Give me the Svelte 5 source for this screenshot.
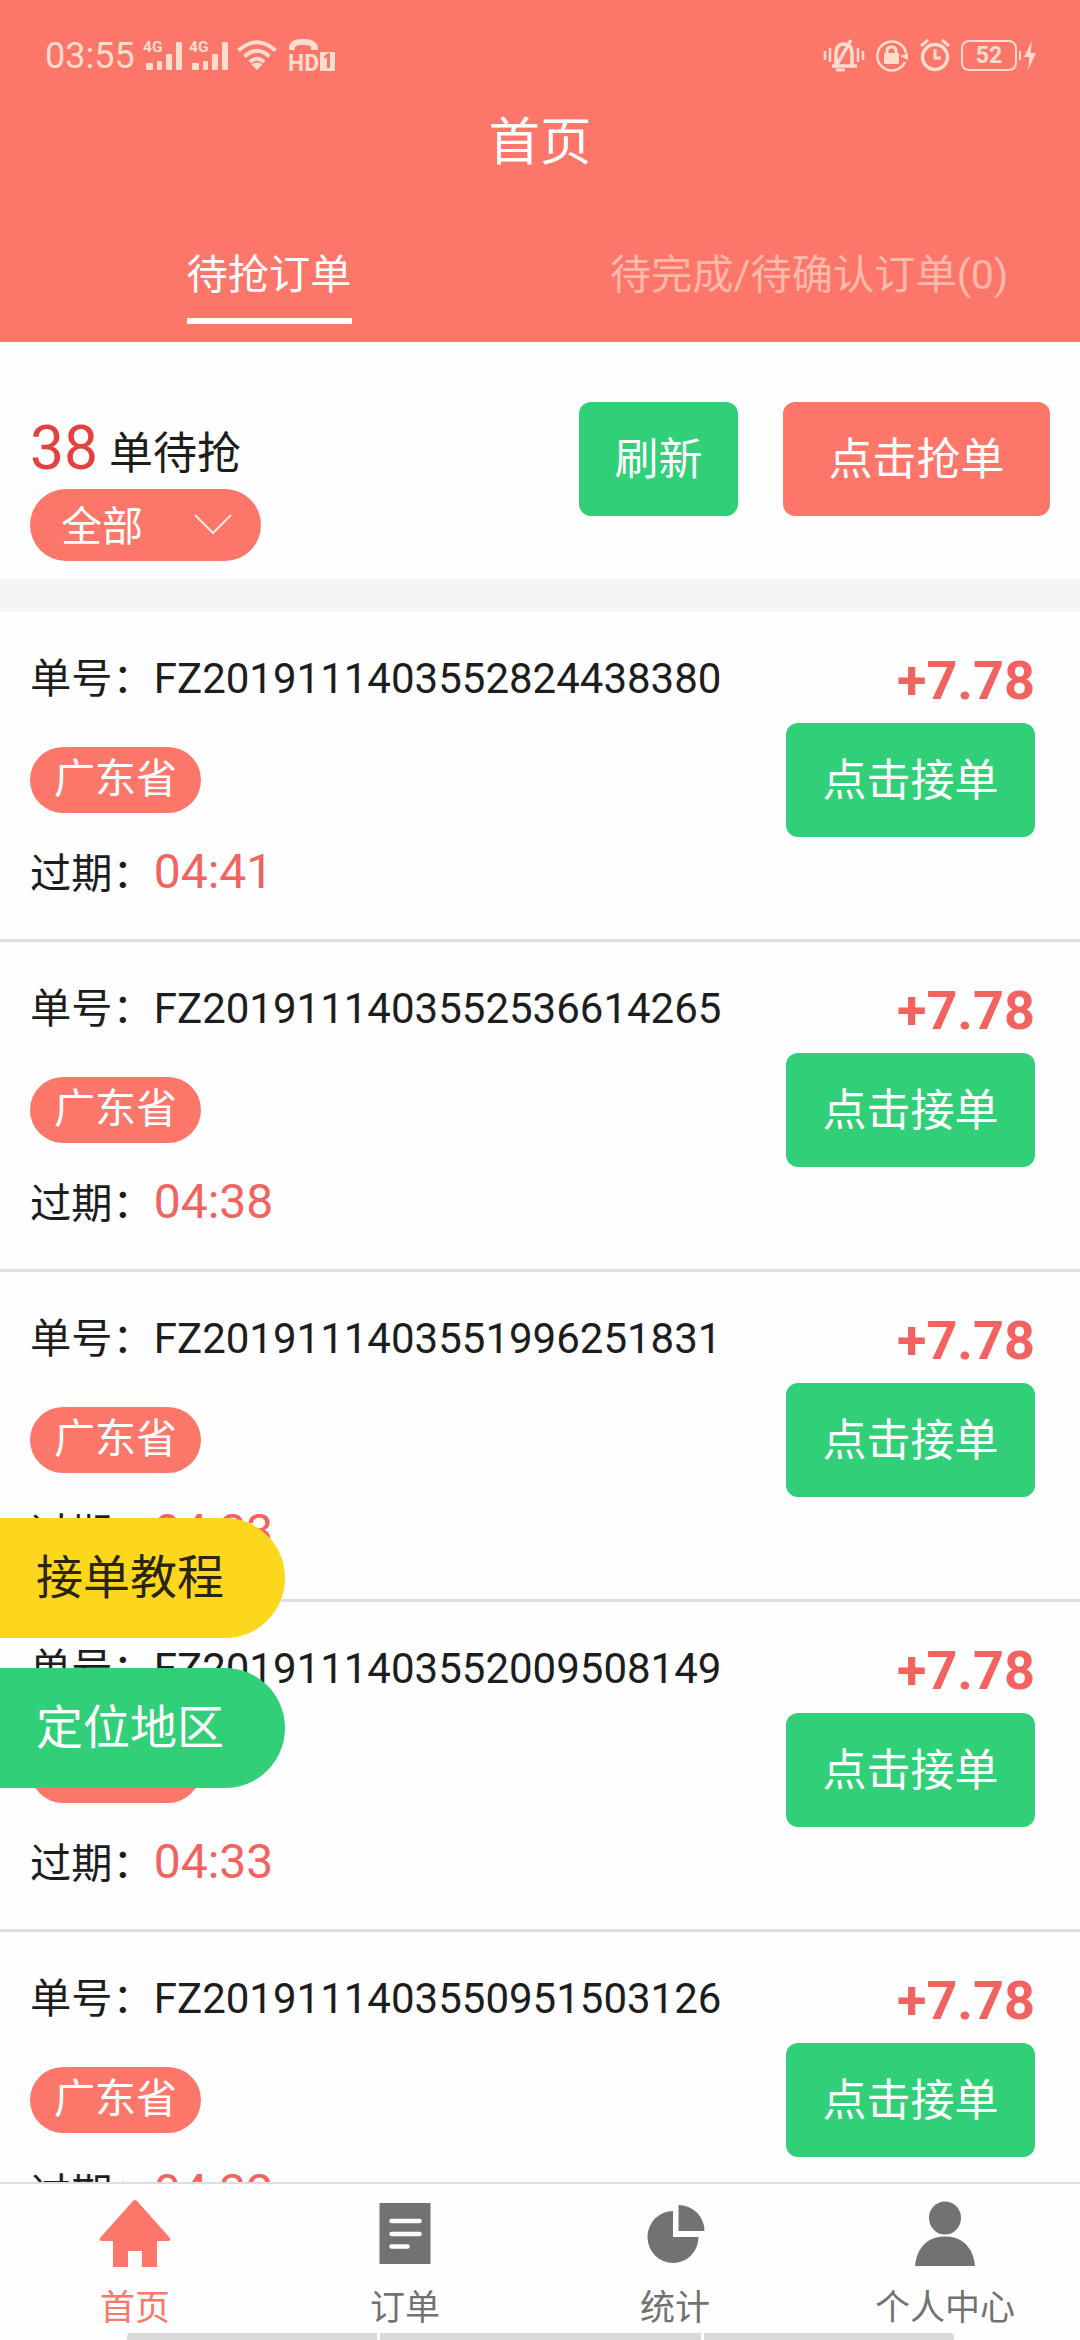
<script lang="ts">
  type Order = { id: string; region: string; expires: string; amount: string };

  const orders: Order[] = [
    { id: 'FZ2019111403552824438380', region: '广东省', expires: '04:41', amount: '+7.78' },
    { id: 'FZ2019111403552536614265', region: '广东省', expires: '04:38', amount: '+7.78' },
    { id: 'FZ2019111403551996251831', region: '广东省', expires: '04:33', amount: '+7.78' },
    { id: 'FZ2019111403552009508149', region: '广东省', expires: '04:33', amount: '+7.78' },
    { id: 'FZ2019111403550951503126', region: '广东省', expires: '04:32', amount: '+7.78' },
  ];

  const navItems = [
    { name: 'home', label: '首页' },
    { name: 'orders', label: '订单' },
    { name: 'stats', label: '统计' },
    { name: 'me', label: '个人中心' },
  ];

  let activeTab = $state(0);
  let activeNav = $state('home');
</script>

{#snippet signal()}
  <svg class="signal" width="38" height="32" viewBox="0 0 38 32">
    <text x="-1" y="12" class="network">4G</text>
    <rect x="2" y="23" width="7" height="7" rx="1" />
    <rect x="13" y="21" width="5" height="9" rx="1" />
    <rect x="22" y="14" width="6" height="16" rx="1" />
    <rect x="32" y="2" width="6" height="28" rx="1" />
  </svg>
{/snippet}

<div class="screen">
  <header>
    <div class="status-bar">
      <div class="status-left">
        <span class="clock">03:55</span>
        {@render signal()}
        {@render signal()}
        <svg class="wifi" width="40" height="32" viewBox="0 0 40 32">
          <path d="M1.500 10.500Q20-6 38.500 10.500" />
          <path d="M7.500 16.500Q20 5 32.500 16.500" />
          <path d="M13 22Q20 15.500 27 22" />
          <path class="dot" d="M14.500 24.500Q20 20.500 25.500 24.500L20 30z" />
        </svg>
        <svg class="hd" width="48" height="34" viewBox="0 0 48 34">
          <path d="M1 11C0 3 6 0 15 0s16 3 15 11h-7c1-4-1-5-8-5s-9 1-8 5z" />
          <text x="0" y="32" class="hd-text" textLength="31" lengthAdjust="spacingAndGlyphs">HD</text>
          <rect x="32" y="13" width="15" height="19" rx="1" />
          <path class="cut" d="M36.500 18.500l4-2.500v13" />
        </svg>
      </div>
      <div class="status-right">
        <svg width="42" height="34" viewBox="0 0 42 34">
          <path class="line" d="M2 12v9M7 9v14M35 9v14M40 12v9" stroke-width="2.500" />
          <path class="line" d="M9 27h25M13 27V15q0-10 8-10t8 10v12M28 1L12 29" stroke-width="3.500" />
          <path class="line" d="M13 31h9" stroke-width="3" />
        </svg>
        <svg width="34" height="34" viewBox="0 0 34 34">
          <path class="line" d="M30 23A14.500 14.500 0 1 1 31 14" stroke-width="2.500" />
          <path d="M25 17l8-3v7z" />
          <rect x="9" y="14" width="15" height="11" rx="1" />
          <path class="line" d="M12 15v-3q0-4 4.500-4t4.500 4v3" stroke-width="3" />
        </svg>
        <svg width="32" height="34" viewBox="0 0 32 34">
          <circle class="line" cx="16" cy="18" r="12.500" stroke-width="3.500" />
          <path class="line" d="M2 7l7-6M30 7l-7-6M16 10v9h6" stroke-width="3" />
        </svg>
        <div class="battery"><span>52</span></div>
        <svg class="bolt" width="18" height="32" viewBox="0 0 18 32">
          <rect x="0" y="11" width="2" height="9" />
          <path d="M13 1L5 17h5.500L9 30l8-17h-5.500z" />
        </svg>
      </div>
    </div>
    <h1>首页</h1>
    <div class="tabs">
      <div class="tab">
        <button class:active={activeTab === 0} onclick={() => (activeTab = 0)}>待抢订单</button>
      </div>
      <div class="tab">
        <button class:active={activeTab === 1} onclick={() => (activeTab = 1)}>待完成/待确认订单(0)</button>
      </div>
    </div>
  </header>

  <section class="summary">
    <div class="summary-info">
      <div class="count"><strong>38</strong> 单待抢</div>
      <button class="filter">
        <span>全部</span>
        <svg width="38" height="22" viewBox="0 0 38 22">
          <path d="M1 1l18 18L37 1" />
        </svg>
      </button>
    </div>
    <button class="btn refresh">刷新</button>
    <button class="btn grab">点击抢单</button>
  </section>

  <main>
    {#each orders as order (order.id)}
      <article>
        <div class="details">
          <div class="text">单号：<span class="number">{order.id}</span></div>
          <span class="region">{order.region}</span>
          <div class="text">过期：<span class="expires">{order.expires}</span></div>
        </div>
        <div class="action">
          <span class="amount">{order.amount}</span>
          <button class="btn accept">点击接单</button>
        </div>
      </article>
    {/each}
  </main>

  <nav>
    {#each navItems as item (item.name)}
      <button class:active={activeNav === item.name} onclick={() => (activeNav = item.name)}>
        <svg width="72" height="68" viewBox="0 0 72 68">
          {#if item.name === 'home'}
            <path d="M36 0Q37 0 38 1L71 38Q72 41 69 41H58V67H43V51H29V67H14V41H3Q0 41 1 38L34 1Q35 0 36 0z" />
          {:else if item.name === 'orders'}
            <rect x="10.500" y="3" width="51" height="61" />
            <path class="rows" d="M22.500 21h28M22.500 34h28M22.500 46.500h16" />
          {:else if item.name === 'stats'}
            <path d="M34 11A25.500 26 0 1 0 59.500 37H34z" />
            <path d="M39.500 5A26 26 0 0 1 65.500 31H39.500z" />
          {:else}
            <ellipse cx="36" cy="18" rx="16" ry="16.500" />
            <path d="M6 66C8 46 20 36.500 36 36.500S64 46 66 66z" />
          {/if}
        </svg>
        <span>{item.label}</span>
      </button>
    {/each}
  </nav>

  <div class="home-indicator"><i></i><i></i><i></i></div>

  <div class="floating">
    <button class="guide">接单教程</button>
    <button class="locate">定位地区</button>
  </div>
</div>

<style>
  :global(body) {
    margin: 0;
  }

  .screen {
    position: relative;
    display: flex;
    flex-direction: column;
    width: 1080px;
    height: 2340px;
    overflow: hidden;
    background: #fefefe;
    color: #1d1d1d;
    font-family: Roboto, "Noto Sans CJK SC", sans-serif;
  }

  button {
    margin: 0;
    padding: 0;
    border: none;
    background: none;
    color: inherit;
    font-family: inherit;
    white-space: nowrap;
    cursor: pointer;
  }

  header {
    display: flex;
    flex-direction: column;
    flex: none;
    height: 342px;
    background: #fd766a;
    color: #fff;
  }

  .status-bar {
    display: flex;
    justify-content: space-between;
    align-items: center;
    height: 111px;
    padding: 0 43px 0 45px;
    color: #ffdccd;
  }

  .status-bar svg {
    fill: #ffdccd;
    overflow: visible;
  }

  .status-left,
  .status-right {
    display: flex;
    align-items: center;
  }

  .clock {
    width: 99px;
    font-size: 36px;
    line-height: 40px;
  }

  .signal {
    margin-right: 8px;
  }

  .network {
    font-size: 15.500px;
    font-weight: 700;
  }

  .wifi {
    margin: 0 11px 0 1px;
  }

  .wifi path {
    fill: none;
    stroke: #ffdccd;
    stroke-width: 4;
  }

  .wifi .dot {
    fill: #ffdccd;
    stroke: none;
  }

  .hd-text {
    font-size: 24px;
    font-weight: 700;
  }

  .hd .cut {
    fill: none;
    stroke: #fd766a;
    stroke-width: 3;
  }

  .status-right svg {
    margin-right: 10px;
  }

  .status-right .line {
    fill: none;
    stroke: #ffdccd;
  }

  .battery {
    box-sizing: border-box;
    width: 56px;
    height: 31px;
    border: 2px solid #ffdccd;
    border-radius: 8px;
    font-size: 23px;
    font-weight: 700;
    line-height: 28px;
    text-align: center;
  }

  .status-right .bolt {
    margin: 0 0 0 2px;
  }

  h1 {
    margin: 0;
    font-size: 51.500px;
    font-weight: 400;
    line-height: 64px;
    text-align: center;
  }

  .tabs {
    display: flex;
    margin-top: 73px;
  }

  .tab {
    display: flex;
    flex: 1 1 0;
    justify-content: center;
    padding-right: 2px;
  }

  .tab button {
    height: 76px;
    padding-bottom: 15px;
    box-sizing: border-box;
    border-bottom: 6px solid transparent;
    color: #ffb9aa;
    font-size: 41.250px;
    line-height: 55px;
  }

  .tab .active {
    border-color: #fff;
    color: #fff;
  }

  .summary {
    display: flex;
    flex: none;
    align-items: flex-start;
    height: 237px;
    padding: 0 30px;
    box-sizing: border-box;
  }

  .summary-info {
    flex: 1;
    padding-top: 71px;
  }

  .count {
    height: 76px;
    font-size: 44px;
    line-height: 72px;
    white-space: pre;
  }

  .count strong {
    color: #e6403e;
    font-size: 60.500px;
    font-weight: 400;
  }

  .filter {
    display: flex;
    justify-content: space-between;
    align-items: center;
    width: 231px;
    height: 72px;
    padding: 0 29px 0 31px;
    border-radius: 36px;
    background: #fd766a;
    color: #fff;
    font-size: 41px;
  }

  .filter span {
    padding-bottom: 5px;
  }

  .filter svg {
    fill: none;
    stroke: #ffe9df;
    stroke-width: 2;
  }

  .btn {
    height: 114px;
    border-radius: 12px;
    color: #fff;
    font-size: 44px;
    line-height: 116px;
  }

  .refresh {
    width: 159px;
    margin-top: 60px;
    background: #31cf78;
  }

  .grab {
    width: 267px;
    margin: 60px 0 0 45px;
    background: #fd766a;
  }

  main {
    flex: 1;
    min-height: 0;
    overflow: hidden;
    border-top: 33px solid #f6f5f6;
  }

  article {
    display: flex;
    justify-content: space-between;
    height: 330px;
    padding: 37px 45px 0 30px;
    box-sizing: border-box;
    border-bottom: 3px solid #e0e0e0;
  }

  .details {
    display: flex;
    flex-direction: column;
    align-items: flex-start;
  }

  .text {
    height: 60px;
    font-size: 41.250px;
    line-height: 60px;
    white-space: nowrap;
  }

  .number {
    font-size: 42px;
  }

  .expires {
    color: #f2625f;
    font-size: 48px;
  }

  .region {
    width: 171px;
    height: 66px;
    margin: 38px 0 29px;
    border-radius: 33px;
    background: #fd766a;
    color: #fff;
    font-size: 41px;
    line-height: 64px;
    text-align: center;
  }

  .action {
    display: flex;
    flex-direction: column;
    align-items: flex-end;
  }

  .amount {
    height: 74px;
    color: #f2625f;
    font-size: 54px;
    font-weight: 700;
    line-height: 64px;
  }

  .accept {
    width: 249px;
    background: #31cf78;
  }

  nav {
    display: flex;
    flex: none;
    height: 151px;
    box-sizing: border-box;
    border-top: 2px solid #dedede;
    background: #fefefe;
    color: #727272;
  }

  nav button {
    display: flex;
    flex: 1 1 0;
    flex-direction: column;
    align-items: center;
    padding-top: 16px;
    font-size: 35px;
    line-height: 44px;
  }

  nav .active {
    color: #fd766a;
  }

  nav svg {
    display: block;
    margin-bottom: 19px;
    fill: currentColor;
  }

  nav .rows {
    fill: none;
    stroke: #fff;
    stroke-width: 4.500;
    stroke-linecap: round;
  }

  .home-indicator {
    display: flex;
    flex: none;
    gap: 3px;
    width: 827px;
    height: 7px;
    margin-left: 127px;
  }

  .home-indicator i {
    flex: 320 1 0;
    background: #d9d9d8;
  }

  .home-indicator i:first-child {
    flex-grow: 250;
    border-top-left-radius: 4px;
  }

  .home-indicator i:last-child {
    flex-grow: 250;
    border-top-right-radius: 4px;
  }

  /* shortcut buttons pinned over the list */
  .floating {
    position: absolute;
    top: 1518px;
    left: 0;
    display: flex;
    flex-direction: column;
    gap: 30px;
  }

  .floating button {
    width: 285px;
    height: 120px;
    padding-left: 36px;
    border-radius: 0 60px 60px 0;
    font-size: 47px;
    line-height: 120px;
    text-align: left;
  }

  .guide {
    background: #fdd71e;
    color: #2a2410;
  }

  .locate {
    background: #31cf78;
    color: #fff;
  }
</style>
